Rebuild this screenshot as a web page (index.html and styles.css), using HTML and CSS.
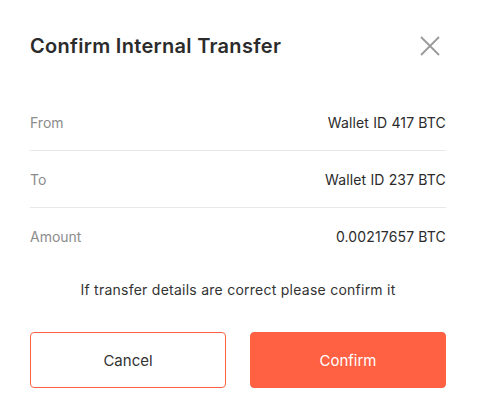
FILE: index.html
```html
<!DOCTYPE html>
<html>
<head>
<meta charset="utf-8">
<link rel="stylesheet" href="styles.css">
</head>
<body>
<div class="modal">
  <div class="header">
    <h1 class="title">Confirm Internal Transfer</h1>
    <button class="close" aria-label="Close">
      <svg width="20" height="20" viewBox="0 0 20 20"><path d="M1 1L19 19M19 1L1 19" stroke="#999" stroke-width="1.8" fill="none"/></svg>
    </button>
  </div>
  <div class="rows">
    <div class="row"><span class="label">From</span><span class="value">Wallet ID 417 BTC</span></div>
    <div class="row"><span class="label">To</span><span class="value">Wallet ID 237 BTC</span></div>
    <div class="row"><span class="label">Amount</span><span class="value">0.00217657 BTC</span></div>
  </div>
  <p class="message">If transfer details are correct please confirm it</p>
  <div class="actions">
    <button class="btn btn-cancel">Cancel</button>
    <button class="btn btn-confirm">Confirm</button>
  </div>
</div>
</body>
</html>
```
FILE: styles.css
```css
html, body { margin: 0; padding: 0; background: #fff; }
body { font-family: "Inter", "Noto Sans", sans-serif; color: #333; }
.modal { width: 416px; padding: 0 32px 0 30px; }
.header { display: flex; align-items: center; justify-content: space-between; height: 56px; padding-top: 18px; }
.title { margin: 0; font-size: 20px; font-weight: 600; color: #2b2b2b; letter-spacing: 0.3px; }
.close { background: none; border: 0; padding: 0; width: 20px; height: 20px; margin-right: 6px; cursor: pointer; display: flex; }
.rows { margin-top: 20px; }
.row { display: flex; justify-content: space-between; align-items: center; height: 56px; font-size: 14px; border-bottom: 1px solid #e8e8e8; }
.row:last-child { border-bottom: 0; }
.label { color: #8c8c8c; }
.value { color: #2b2b2b; letter-spacing: 0.15px; }
.message { margin: 16px 0 0; text-align: center; font-size: 14px; line-height: 20px; color: #333; letter-spacing: 0.25px; }
.actions { display: flex; gap: 24px; margin-top: 32px; }
.btn { flex: 1; height: 56px; border-radius: 4px; font-family: inherit; font-size: 15px; cursor: pointer; }
.btn-cancel { background: #fff; border: 1px solid #ff6142; color: #333; }
.btn-confirm { background: #ff6142; border: 1px solid #ff6142; color: #fff; }
```
